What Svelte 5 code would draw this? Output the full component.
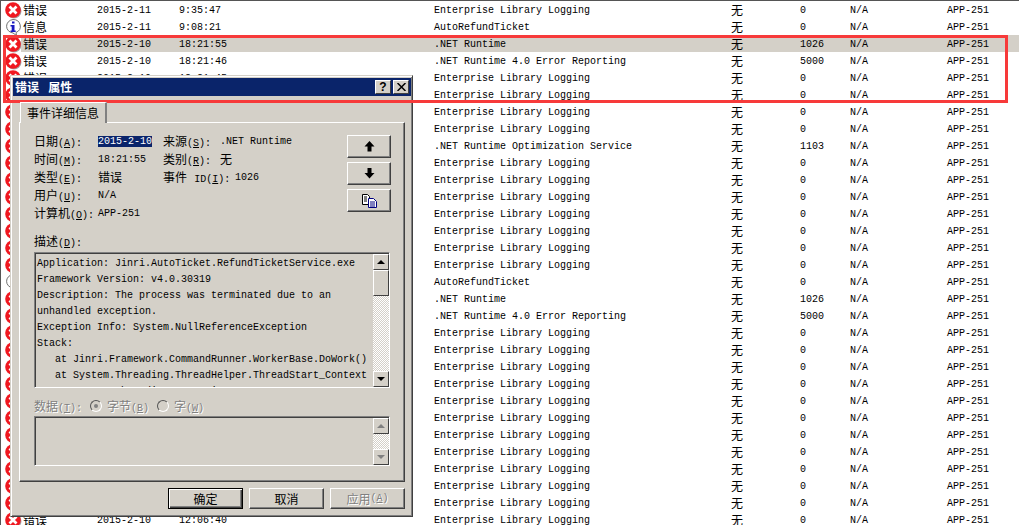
<script>
    const enterprise = 'Enterprise Library Logging';

    // event log rows; dates and times below the dialog are mostly covered by it
    const rows = [];
    const add = (type, time, source, id, date = '2015-2-10') => {
        rows.push({ type, date, time, source, id });
    };
    add('错误', '9:35:47', enterprise, '0', '2015-2-11');
    add('信息', '9:08:21', 'AutoRefundTicket', '0', '2015-2-11');
    add('错误', '18:21:55', '.NET Runtime', '1026');
    add('错误', '18:21:46', '.NET Runtime 4.0 Error Reporting', '5000');
    add('错误', '18:21:45', enterprise, '0');
    add('错误', '18:21:45', enterprise, '0');
    add('错误', '18:21:40', enterprise, '0');
    add('错误', '18:21:40', enterprise, '0');
    add('错误', '18:02:11', '.NET Runtime Optimization Service', '1103');
    for (let i = 0; i < 7; i++) add('错误', '16:40:12', enterprise, '0');
    add('信息', '12:40:01', 'AutoRefundTicket', '0');
    add('错误', '12:38:20', '.NET Runtime', '1026');
    add('错误', '12:38:11', '.NET Runtime 4.0 Error Reporting', '5000');
    for (let i = 0; i < 11; i++) add('错误', '12:10:30', enterprise, '0');
    add('错误', '12:06:40', enterprise, '0');

    const description = [
        'Application: Jinri.AutoTicket.RefundTicketService.exe',
        'Framework Version: v4.0.30319',
        'Description: The process was terminated due to an',
        'unhandled exception.',
        'Exception Info: System.NullReferenceException',
        'Stack:',
        '   at Jinri.Framework.CommandRunner.WorkerBase.DoWork()',
        '   at System.Threading.ThreadHelper.ThreadStart_Context',
        '   at System.Threading.ExecutionContext.Run'
    ];
</script>

<div class="screen">
    <div class="list">
        {#each rows as row, i}
            <div class="row" class:selected={i === 2}>
                <div class="icon">
                    {#if row.type === '错误'}
                        <svg width="17" height="17" viewBox="0 0 17 17">
                            <circle cx="9" cy="9" r="7.5" fill="#a8a8a8" />
                            <circle cx="8" cy="8" r="7.8" fill="#f01820" />
                            <path d="M4.500 4.500l7 7M11.500 4.500l-7 7" stroke="#fff" stroke-width="2.800" />
                        </svg>
                    {:else}
                        <svg width="17" height="17" viewBox="0 0 17 17">
                            <path d="M8 .5a7.300 6.800 0 0 1 3 13L11.500 16.500 8 14A7.300 6.800 0 0 1 8 .5z" fill="#fff" stroke="#707070" />
                            <rect x="7" y="2.500" width="2.500" height="2" fill="#1818c0" />
                            <path d="M5.500 6h4v5.500h1.200v1.500H5.500v-1.500h1.200V7.500H5.500z" fill="#1818c0" />
                        </svg>
                    {/if}
                </div>
                <div class="cells">
                    <span class="type">{row.type}</span>
                    <span class="date">{row.date}</span>
                    <span class="time">{row.time}</span>
                    <span class="source">{row.source}</span>
                    <span class="category">无</span>
                    <span class="id">{row.id}</span>
                    <span class="user">N/A</span>
                    <span class="computer">APP-251</span>
                </div>
            </div>
        {/each}
    </div>

    <div class="dialog">
        <div class="titlebar">
            <span class="title">错误 属性</span>
            <div class="title-buttons">
                <div class="title-btn help">?</div>
                <div class="title-btn close">
                    <svg width="9" height="8" viewBox="0 0 9 8">
                        <path d="M.5 0l8 8M8.500 0l-8 8" stroke="#000" stroke-width="1.500" />
                    </svg>
                </div>
            </div>
        </div>

        <div class="tab">事件详细信息</div>
        <div class="panel">
            <div class="info">
                <div class="fields">
                    <div class="field"><span class="lbl">日期<span class="key">(<u>A</u>):</span></span><span class="val"><span class="highlight">2015-2-10</span></span><span class="lbl2">来源<span class="key">(<u>S</u>):</span></span><span>.NET Runtime</span></div>
                    <div class="field"><span class="lbl">时间<span class="key">(<u>M</u>):</span></span><span class="val">18:21:55</span><span class="lbl2">类别<span class="key">(<u>R</u>):</span></span><span class="cjk">无</span></div>
                    <div class="field"><span class="lbl">类型<span class="key">(<u>E</u>):</span></span><span class="val cjk">错误</span><span class="lbl2 wide">事件 <span class="key">ID(<u>I</u>):</span></span><span>1026</span></div>
                    <div class="field"><span class="lbl">用户<span class="key">(<u>U</u>):</span></span><span class="val">N/A</span></div>
                    <div class="field"><span class="lbl">计算机<span class="key">(<u>O</u>):</span></span><span class="val">APP-251</span></div>
                </div>
                <div class="nav">
                    <button class="btn nav-btn" aria-label="上一个">
                        <svg width="11" height="11" viewBox="0 0 11 11"><path d="M5.500 0L10.500 5.500H7.500V10.500H3.500V5.500H.5z" fill="#000" /></svg>
                    </button>
                    <button class="btn nav-btn" aria-label="下一个">
                        <svg width="11" height="11" viewBox="0 0 11 11"><path d="M3.500 0H7.500V5H10.500L5.500 10.500L.5 5H3.500z" fill="#000" /></svg>
                    </button>
                    <button class="btn nav-btn" aria-label="复制">
                        <svg width="15" height="14" viewBox="0 0 15 14">
                            <path d="M.5.5h5l2 2v8H.5z" fill="#fff" stroke="#000" />
                            <path d="M2 3h3M2 5h3M2 7h3" stroke="#000" />
                            <path d="M6.500 4.500h5l3 3v6h-8z" fill="#fff" stroke="#000080" />
                            <path d="M8 8h5M8 10h5M8 12h5" stroke="#000080" />
                        </svg>
                    </button>
                </div>
            </div>

            <div class="desc-label">描述<span class="key">(<u>D</u>):</span></div>
            <div class="textbox desc">
                <div class="desc-text">
                    {#each description as line}
                        <div class="line">{line}</div>
                    {/each}
                </div>
                <div class="scrollbar">
                    <div class="sb-btn"><span class="arrow up"></span></div>
                    <div class="sb-thumb"></div>
                    <div class="sb-track"></div>
                    <div class="sb-btn"><span class="arrow down"></span></div>
                </div>
            </div>

            <div class="data-row">
                <span class="data-label">数据<span class="key">(<u>T</u>):</span></span>
                <span class="radio checked"></span><span class="data-opt">字节<span class="key">(<u>B</u>)</span></span>
                <span class="radio"></span><span class="data-opt">字<span class="key">(<u>W</u>)</span></span>
            </div>
            <div class="textbox data">
                <div class="data-text"></div>
                <div class="scrollbar off">
                    <div class="sb-btn"><span class="arrow up"></span></div>
                    <div class="sb-track"></div>
                    <div class="sb-btn"><span class="arrow down"></span></div>
                </div>
            </div>
        </div>

        <div class="actions">
            <button class="btn action default">确定</button>
            <button class="btn action">取消</button>
            <button class="btn action disabled">应用<span class="key">(<u>A</u>)</span></button>
        </div>
    </div>

    <div class="marker"></div>
</div>

<style>
    :global(body) {
        margin: 0;
        background: #fff;
        overflow: hidden;
    }

    .screen {
        position: relative;
        width: 1019px;
        height: 525px;
        overflow: hidden;
        background: #fff;
        color: #000;
        font-family: "Liberation Mono", "Noto Sans CJK SC", monospace;
        font-size: 10px;
        box-sizing: border-box;
        border-top: 1px solid #555;
        border-left: 1px solid #555;
    }

    .list {
        display: flex;
        flex-direction: column;
    }

    .row {
        display: flex;
        align-items: center;
        height: 17px;
        padding-left: 4px;
    }

    .icon {
        width: 16px;
        height: 16px;
        flex: none;
    }

    .icon svg {
        display: block;
    }

    .cells {
        flex: 1;
        height: 100%;
        box-sizing: border-box;
        display: grid;
        grid-template-columns: 74px 82px 255px 297px 69px 50px 97px 1fr;
        align-items: center;
        padding: 0 0 1px 2px;
        white-space: nowrap;
    }

    .selected .cells {
        background: #d4d0c8;
    }

    .type, .category, .cjk {
        font-size: 12px;
    }

    .key {
        font-size: 10px;
    }

    .dialog {
        position: absolute;
        left: 9px;
        top: 74px;
        width: 403px;
        height: 442px;
        box-sizing: border-box;
        background: #d4d0c8;
        border: 1px solid;
        border-color: #d4d0c8 #404040 #404040 #d4d0c8;
        box-shadow: inset 1px 1px 0 #fff, inset -1px -1px 0 #808080;
        padding: 2px 1px 2px 2px;
        display: flex;
        flex-direction: column;
    }

    .titlebar {
        height: 18px;
        background: #0a246a;
        display: flex;
        align-items: center;
        justify-content: space-between;
        padding: 0 2px;
        flex: none;
    }

    .title {
        color: #fff;
        font-size: 12px;
        font-weight: bold;
        word-spacing: 2px;
    }

    .title-buttons {
        display: flex;
        gap: 2px;
    }

    .title-btn {
        width: 16px;
        height: 14px;
        box-sizing: border-box;
        background: #d4d0c8;
        border: 1px solid;
        border-color: #fff #404040 #404040 #fff;
        display: flex;
        align-items: center;
        justify-content: center;
    }

    .help {
        font: bold 12px "Liberation Sans", sans-serif;
    }

    .tab {
        flex: none;
        align-self: flex-start;
        margin: 6px 0 -1px 7px;
        width: 87px;
        height: 21px;
        box-sizing: border-box;
        padding-top: 5px;
        text-align: center;
        font-size: 12px;
        line-height: 14px;
        border-top: 1px solid #fff;
        border-left: 1px solid #fff;
        border-right: 2px solid #808080;
        position: relative;
        z-index: 1;
        background: #d4d0c8;
    }

    .panel {
        flex: none;
        margin-left: 6px;
        width: 386px;
        height: 360px;
        box-sizing: border-box;
        border: 1px solid;
        border-color: #fff #404040 #404040 #fff;
        box-shadow: inset -1px -1px 0 #808080;
        padding: 0 14px;
    }

    .info {
        display: flex;
        justify-content: space-between;
        height: 112px;
    }

    .fields {
        padding-top: 9px;
    }

    .field {
        display: flex;
        align-items: center;
        height: 18px;
    }

    .lbl {
        width: 64px;
        font-size: 12px;
        white-space: nowrap;
    }

    .val {
        width: 65px;
    }

    .lbl2 {
        width: 57px;
        font-size: 12px;
        white-space: nowrap;
    }

    .lbl2.wide {
        width: 72px;
    }

    .highlight {
        background: #0a246a;
        color: #fff;
    }

    .nav {
        display: flex;
        flex-direction: column;
        gap: 4px;
        padding-top: 12px;
        margin-right: -1px;
    }

    .btn {
        background: #d4d0c8;
        border: 1px solid;
        border-color: #fff #404040 #404040 #fff;
        box-shadow: inset -1px -1px 0 #808080;
        padding: 0;
        margin: 0;
        font-family: "Liberation Mono", "Noto Sans CJK SC", monospace;
        font-size: 12px;
        color: #000;
        display: flex;
        align-items: center;
        justify-content: center;
        box-sizing: border-box;
    }

    .nav-btn {
        width: 44px;
        height: 23px;
    }

    .desc-label {
        font-size: 12px;
        height: 17px;
        line-height: 14px;
        padding-top: 1px;
        box-sizing: border-box;
    }

    .textbox {
        display: flex;
        box-sizing: border-box;
        width: 356px;
        border: 1px solid;
        border-color: #808080 #fff #fff #808080;
        box-shadow: inset 1px 1px 0 #404040;
        overflow: hidden;
    }

    .desc {
        height: 136px;
    }

    .desc-text {
        flex: 1;
        padding: 3px 0 0 2px;
        min-width: 0;
        overflow: hidden;
    }

    .line {
        height: 16px;
        line-height: 16px;
        white-space: pre;
    }

    .scrollbar {
        width: 16px;
        flex: none;
        display: flex;
        flex-direction: column;
        padding: 1px 0 0;
    }

    .sb-btn, .sb-thumb {
        box-sizing: border-box;
        background: #d4d0c8;
        border: 1px solid;
        border-color: #fff #404040 #404040 #fff;
        flex: none;
    }

    .sb-btn {
        height: 16px;
        display: flex;
        align-items: center;
        justify-content: center;
    }

    .sb-thumb {
        height: 26px;
    }

    .sb-track {
        flex: 1;
        background: repeating-conic-gradient(#fff 0 25%, #d4d0c8 0 50%) 0 0 / 2px 2px;
    }

    .arrow {
        width: 0;
        height: 0;
        border-left: 4px solid transparent;
        border-right: 4px solid transparent;
    }

    .arrow.up {
        border-bottom: 4px solid #000;
    }

    .arrow.down {
        border-top: 4px solid #000;
    }

    .off .arrow.up {
        border-bottom-color: #808080;
    }

    .off .arrow.down {
        border-top-color: #808080;
    }

    .data-row {
        display: flex;
        align-items: center;
        height: 28px;
        box-sizing: border-box;
        padding-top: 7px;
        font-size: 12px;
        white-space: nowrap;
        color: #808080;
        text-shadow: 1px 1px 0 #fff;
    }

    .data-label {
        width: 56px;
    }

    .data-opt {
        margin-left: 5px;
        width: 50px;
    }

    .radio {
        width: 12px;
        height: 12px;
        flex: none;
        box-sizing: border-box;
        border-radius: 50%;
        border: 1px solid;
        border-color: #555 #fff #fff #555;
        display: inline-flex;
        align-items: center;
        justify-content: center;
    }

    .radio.checked::after {
        content: "";
        width: 4px;
        height: 4px;
        border-radius: 50%;
        background: #808080;
    }

    .data {
        height: 50px;
    }

    .data-text {
        flex: 1;
    }

    .actions {
        flex: none;
        display: flex;
        justify-content: flex-end;
        gap: 6px;
        margin-top: 6px;
        padding-right: 6px;
    }

    .action {
        width: 75px;
        height: 21px;
    }

    .default {
        border: 1px solid #000;
        box-shadow: inset 1px 1px 0 #fff, inset -1px -1px 0 #404040, inset -2px -2px 0 #808080;
    }

    .disabled {
        color: #808080;
        text-shadow: 1px 1px 0 #fff;
    }

    .marker {
        position: absolute;
        left: 2px;
        top: 34px;
        width: 1005px;
        height: 68px;
        box-sizing: border-box;
        border: 3px solid #f73a3a;
        pointer-events: none;
    }
</style>
